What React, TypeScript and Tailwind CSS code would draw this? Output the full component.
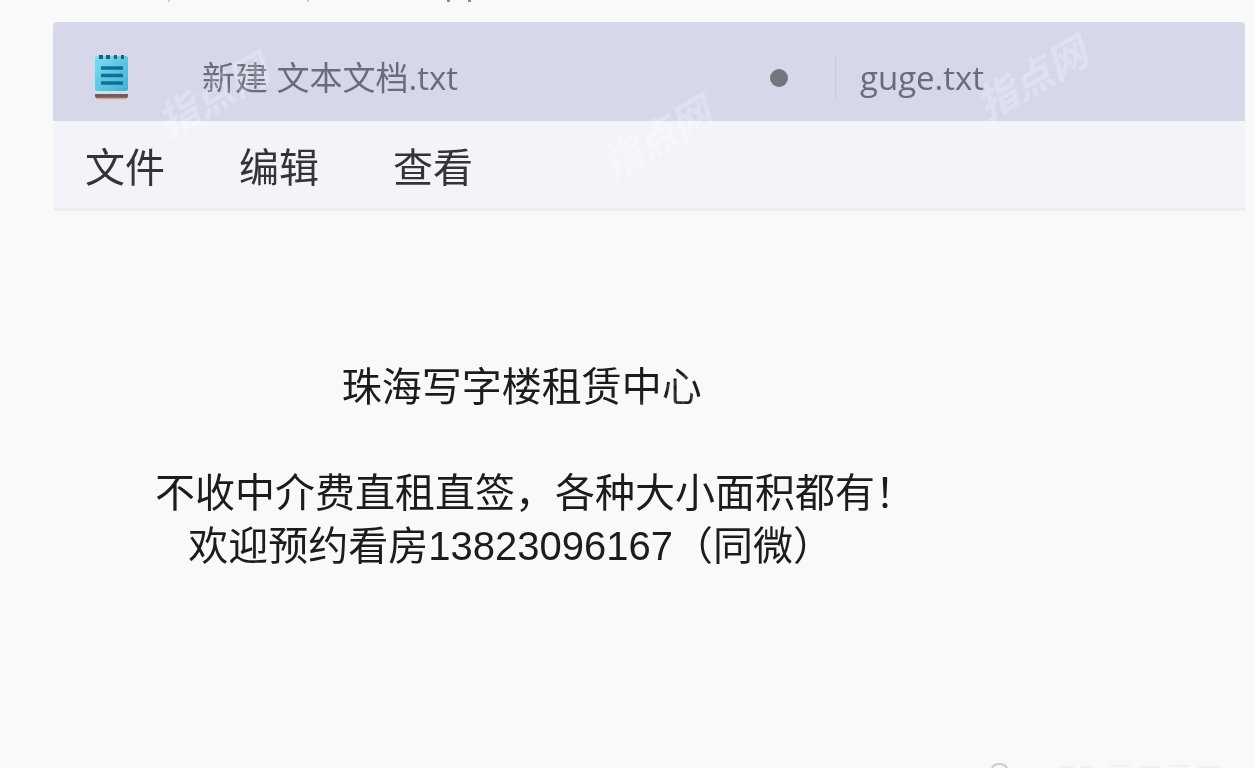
const menus = ['文件', '编辑', '查看'];

const note = [
  '\u3000\u3000\u3000      珠海写字楼租赁中心',
  '',
  '不收中介费直租直签，各种大小面积都有！',
  '   欢迎预约看房13823096167（同微）',
].join('\n');

const watermarks = [
  { x: 213, y: 95 },
  { x: 656, y: 138 },
  { x: 1032, y: 78 },
  { x: 315, y: 355 },
  { x: 640, y: 420 },
  { x: 968, y: 435 },
  { x: 238, y: 688 },
  { x: 710, y: 688 },
  { x: 1035, y: 688 },
];

function NotepadIcon() {
  return (
    <svg width="36" height="48" viewBox="0 0 36 48" aria-hidden="true" className="shrink-0">
      <defs>
        <linearGradient id="paper" x1="0" y1="0" x2="1" y2="1">
          <stop offset="0" stopColor="#7fdcf2" />
          <stop offset="1" stopColor="#3fb2d4" />
        </linearGradient>
      </defs>
      <rect x="2" y="36" width="33" height="4" fill="#c4e4f0" />
      <path d="M2 40h33v1.500a3 3 0 0 1-3 3H5a3 3 0 0 1-3-3z" fill="#7a5a52" />
      <path d="M4 44.500h29" stroke="#d9a58c" strokeWidth="1.500" />
      <rect x="2" y="2" width="33" height="35" rx="2" fill="url(#paper)" />
      <path d="M6 1h4v4H6zM13 1h4v4h-4zM21 1h3v4h-3zM28 1h3v4h-3z" fill="#2b5a78" />
      <path d="M8 14h22M8 21.500h22M8 29h22" stroke="#0f7096" strokeWidth="3.400" />
    </svg>
  );
}

function Watermarks() {
  return (
    <div className="absolute inset-0 overflow-hidden pointer-events-none mix-blend-soft-light" aria-hidden="true">
      {watermarks.map((mark, index) => (
        <span
          key={index}
          className="absolute -translate-x-1/2 -translate-y-1/2 -rotate-30 text-[40px] leading-none font-bold italic whitespace-nowrap text-white/50"
          style={{ left: mark.x, top: mark.y }}
        >
          指点网
        </span>
      ))}
    </div>
  );
}

export default function App() {
  return (
    <div className="relative flex flex-col min-h-screen bg-[#f9f9f9] pl-[53px] pr-[9px] font-['Open_Sans','Noto_Sans_CJK_SC',sans-serif]">
      <div className="h-[22px]">
        <svg width="440" height="4" viewBox="0 0 440 4" aria-hidden="true">
          <path d="M115 0h2v2h-2zM254 0h2v2h-2z" fill="#cfcfcf" />
          <path d="M394 0h3v2h-3zM415 0h3v2h-3z" fill="#8c8c8c" />
        </svg>
      </div>

      <main className="flex flex-col flex-1">
        <div role="tablist" className="flex items-center h-[99px] rounded-t bg-[#d6d8ea] text-[33px] leading-10 text-[#6b6c79]">
          <button role="tab" aria-selected="true" className="flex items-center w-[782px] h-full pt-3 pl-10 pr-[47px]">
            <NotepadIcon />
            <span className="flex-1 pl-[73px] text-left whitespace-nowrap">新建 文本文档.txt</span>
            <span className="size-[18px] rounded-full bg-[#74757f]" />
          </button>
          <span className="w-px h-11 mt-3 bg-[#cacbdd]" />
          <button role="tab" aria-selected="false" className="h-full pt-3 pl-6">guge.txt</button>
        </div>

        <nav className="flex items-center gap-[74px] h-[90px] pl-8 pt-1 bg-[#f3f3fa] border-b-3 border-[#ededf2]">
          {menus.map((menu) => (
            <button key={menu} className="text-[40px] leading-[53px] text-[#333338]">{menu}</button>
          ))}
        </nav>

        <textarea
          aria-label="文本编辑器"
          wrap="off"
          spellCheck={false}
          defaultValue={note}
          className="flex-1 w-full pt-[150px] pl-[102px] bg-transparent resize-none outline-none overflow-hidden text-[40px] leading-[53px] text-[#1c1c1c] font-['Liberation_Sans','Noto_Sans_CJK_SC',sans-serif]"
        />
      </main>

      <Watermarks />

      <svg className="absolute bottom-0 right-0" width="280" height="6" viewBox="0 0 280 6" aria-hidden="true">
        <path d="M18 6a8 6 0 0 1 15 0" fill="none" stroke="#cccccc" strokeWidth="2" />
        <path d="M84 5h16M106 5h14M136 4h20M164 5h22M196 4h18M224 5h24" stroke="#f1f1f1" strokeWidth="2" />
      </svg>
    </div>
  );
}
